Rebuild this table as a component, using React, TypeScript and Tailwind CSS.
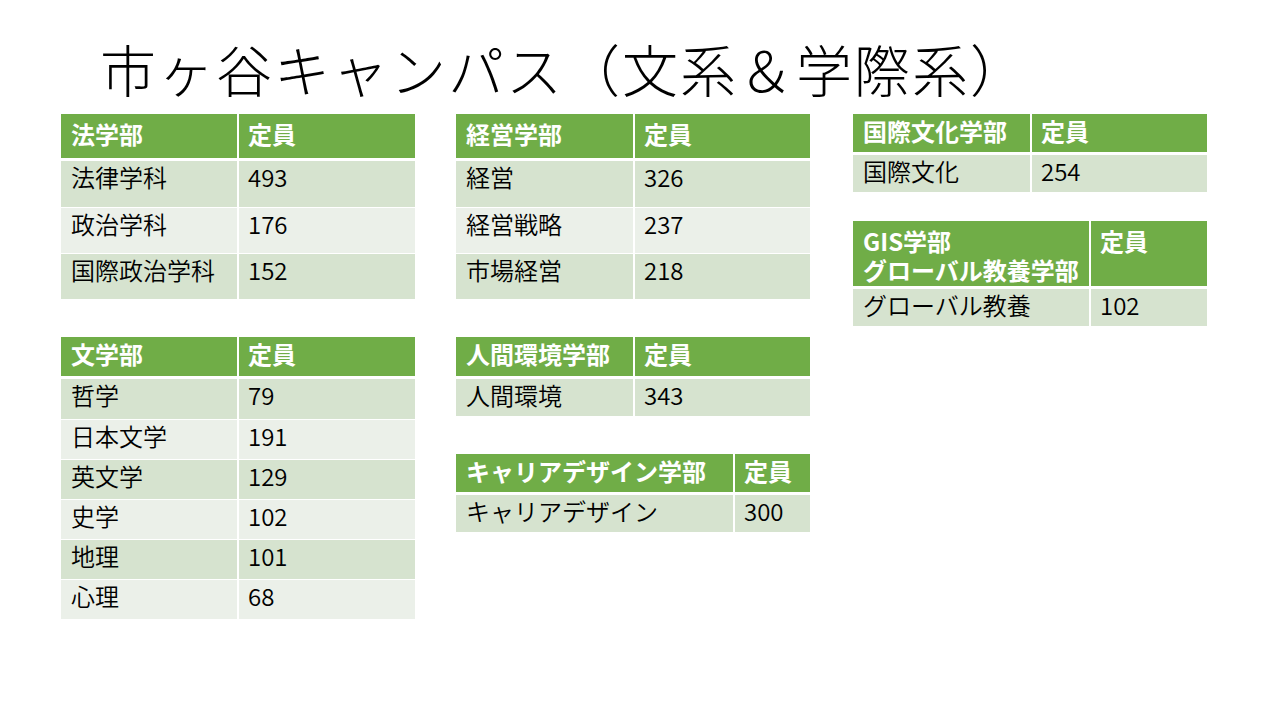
import React from 'react';

type Row = [string, string];

interface TableProps {
  head: React.ReactNode;
  rows: Row[];
  split: string; // first column width class
  headH: string;
  rowH: string;
  headPad?: string;
  headLeading?: string;
}

const bands = ['bg-[#d6e3cf]', 'bg-[#ebf0e9]'];

function CapTable({ head, rows, split, headH, rowH, headPad = 'pt-[5px]', headLeading = 'leading-[30px]' }: TableProps) {
  return (
    <div className="flex flex-col w-[354px]">
      <div className={`flex ${headH} bg-[#70ad47] text-white font-bold border-b-[3px] border-white`}>
        <div className={`${split} shrink-0 px-[10px] ${headPad} ${headLeading}`}>{head}</div>
        <div className={`flex-1 border-l-2 border-white px-[9px] ${headPad} ${headLeading}`}>定員</div>
      </div>
      {rows.map(([name, num], i) => (
        <div key={name} className={`flex ${rowH} ${bands[i % 2]} font-[350] ${i > 0 ? 'border-t border-white' : ''}`}>
          <div className={`${split} shrink-0 px-[10px] pt-[1px] leading-[30px]`}>{name}</div>
          <div className="flex-1 border-l-2 border-white px-[9px] pt-[1px] leading-[30px]">{num}</div>
        </div>
      ))}
    </div>
  );
}

export default function App() {
  return (
    <div
      className="w-[1280px] h-[720px] bg-white overflow-hidden text-[24px] text-black"
      style={{ fontFamily: '"Noto Sans CJK JP", "Noto Sans", sans-serif' }}
    >
      <h1 className="pl-[100px] pt-[37px] h-[114px] text-[56px] leading-[62px] font-light tracking-[2px]">
        市ヶ谷キャンパス（文系＆学際系）
      </h1>

      <div className="flex pl-[61px] gap-[41px]">
        {/* left column */}
        <div className="flex flex-col gap-[38px]">
          <CapTable
            head="法学部"
            split="w-[176px]"
            headH="h-[47px]"
            rowH="h-[46px]"
            headPad="pt-[5px]"
            rows={[
              ['法律学科', '493'],
              ['政治学科', '176'],
              ['国際政治学科', '152'],
            ]}
          />
          <CapTable
            head="文学部"
            split="w-[176px]"
            headH="h-[42px]"
            rowH="h-[40px]"
            headPad="pt-[2px]"
            rows={[
              ['哲学', '79'],
              ['日本文学', '191'],
              ['英文学', '129'],
              ['史学', '102'],
              ['地理', '101'],
              ['心理', '68'],
            ]}
          />
        </div>

        {/* middle column */}
        <div className="flex flex-col">
          <CapTable
            head="経営学部"
            split="w-[177px]"
            headH="h-[47px]"
            rowH="h-[46px]"
            headPad="pt-[5px]"
            rows={[
              ['経営', '326'],
              ['経営戦略', '237'],
              ['市場経営', '218'],
            ]}
          />
          <div className="mt-[38px]">
            <CapTable
              head="人間環境学部"
              split="w-[177px]"
              headH="h-[42px]"
              rowH="h-[37px]"
              headPad="pt-[2px]"
              rows={[['人間環境', '343']]}
            />
          </div>
          <div className="mt-[38px]">
            <CapTable
              head="キャリアデザイン学部"
              split="w-[277px]"
              headH="h-[41px]"
              rowH="h-[37px]"
              headPad="pt-[2px]"
              rows={[['キャリアデザイン', '300']]}
            />
          </div>
        </div>

        {/* right column */}
        <div className="flex flex-col ml-[2px]">
          <CapTable
            head="国際文化学部"
            split="w-[177px]"
            headH="h-[41px]"
            rowH="h-[37px]"
            headPad="pt-[2px]"
            rows={[['国際文化', '254']]}
          />
          <div className="mt-[29px]">
            <CapTable
              head={
                <>
                  GIS学部
                  <br />
                  グローバル教養学部
                </>
              }
              split="w-[236px]"
              headH="h-[68px]"
              rowH="h-[37px]"
              headPad="pt-[5px]"
              headLeading="leading-[29px]"
              rows={[['グローバル教養', '102']]}
            />
          </div>
        </div>
      </div>
    </div>
  );
}
